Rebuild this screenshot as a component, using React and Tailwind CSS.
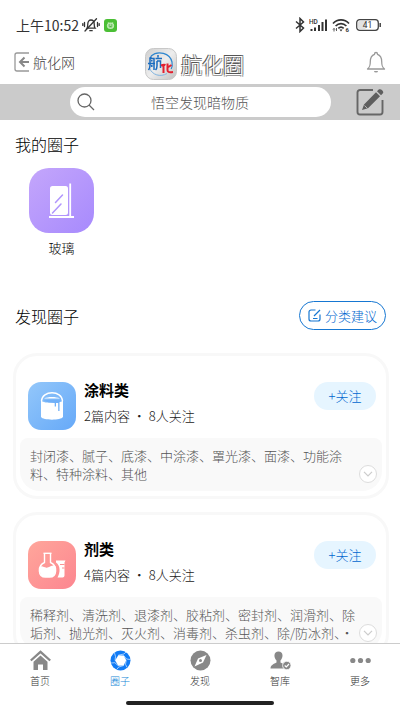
import React from 'react';

function MutedBell() {
  return (
    <svg viewBox="0 0 18 16" className="h-4 w-[18px]" fill="none" stroke="#333" strokeWidth="1.3" strokeLinecap="round">
      <path d="M5 11.2c.8-1 .8-2 .8-4.200C5.800 4.500 7 3 9 3s3.200 1.500 3.200 4c0 2.200 0 3.200.9 4.200z" />
      <path d="M7.800 13.700h2.400M3 14 14.500 1.800M2.500 5.500v4M.8 6.600v1.800M15.500 5.500v4M17.200 6.600v1.800" />
    </svg>
  );
}

function StatusBar() {
  return (
    <div className="flex h-11 shrink-0 items-end justify-between pr-[19px] pl-4 text-[#333]">
      <div className="flex h-[38px] items-center">
        <span className="text-sm">上午10:52</span>
        <span className="ml-[3px]"><MutedBell /></span>
        <svg viewBox="0 0 13 13" className="ml-1 size-[13px]">
          <rect width="13" height="13" rx="3" fill="#4bbf35" />
          <path d="M4 3.200 5 4.300M9 3.200 8 4.300" stroke="#c9f0bf" strokeWidth=".8" />
          <rect x="3.400" y="4" width="6.200" height="5.400" rx="2.200" fill="#a5e197" stroke="#d5f4cd" strokeWidth=".8" />
          <path d="M4.800 6h1M7.200 6h1M5.300 7.700h2.400" stroke="#35962a" strokeWidth=".8" />
        </svg>
      </div>
      <div className="flex h-[38px] items-center">
        <svg viewBox="0 0 10 16" className="h-4 w-2.5" fill="none" stroke="#333" strokeWidth="1.5">
          <path d="M1 4.500 8.500 11 5 14.500v-13L8.500 5 1 11.500" />
        </svg>
        <svg viewBox="0 0 19 16" className="ml-1 h-4 w-[19px]" fill="#333">
          <text x="0" y="6.500" fontSize="6.500" fontWeight="500" fontFamily="Roboto, sans-serif">HD</text>
          <path d="M1.500 12h2v2h-2zM5 10.500h2V14H5zM9 8h2v6H9zM12.500 5h2v9h-2zM16 2.500h2V14h-2z" />
        </svg>
        <svg viewBox="0 0 18 16" className="ml-1 h-4 w-[18px]" fill="none" stroke="#333" strokeWidth="1.700">
          <path d="M1 6.500C5.500 1.700 12.500 1.700 17 6.500M3.600 9c3.200-3.300 7.600-3.300 10.800 0M6.300 11.300c1.700-1.600 3.700-1.600 5.400 0" />
          <path d="M7.500 12.500h3L9 14.500z" fill="#333" stroke="none" />
          <path d="M2 14.500v-3M1 12.500l1-1 1 1M4.500 11v3" strokeWidth=".8" />
          <text x="13.500" y="15" fontSize="6" fontWeight="700" fill="#333" stroke="none" fontFamily="Roboto, sans-serif">6</text>
        </svg>
        <svg viewBox="0 0 25 12" className="ml-1.5 h-3 w-[25px]">
          <rect x=".7" y=".7" width="21.600" height="10.600" rx="3" fill="#fff" stroke="#444" strokeWidth="1.300" />
          <rect x="2" y="2" width="8" height="8" rx="1.500" fill="#e2e2e2" />
          <path d="M24.200 4v4" stroke="#444" strokeWidth="1.500" />
          <text x="11.500" y="9" fontSize="8.500" textAnchor="middle" fill="#333" fontFamily="Roboto, sans-serif">41</text>
        </svg>
      </div>
    </div>
  );
}

function Header() {
  return (
    <header className="grid h-10 shrink-0 grid-cols-[131px_auto_1fr] items-center px-[14px]">
      <a href="#home" className="flex items-center gap-1 pb-1 text-sm leading-5 font-light text-[#444]">
        <svg viewBox="0 0 15 20" className="h-5 w-[15px]" fill="none" stroke="#999" strokeWidth="1.300">
          <path d="M15 1H3a2 2 0 0 0-2 2v14a2 2 0 0 0 2 2h12" />
          <path d="M15 10H6.500M10.500 5.500 6 10l4.500 4.500" stroke="#888" strokeWidth="2" />
        </svg>
        航化网
      </a>
      <div className="flex items-center gap-1">
        <svg viewBox="0 0 32 32" className="size-8">
          <defs>
            <linearGradient id="logo" x1="0" y1="0" x2="1" y2="1">
              <stop stopColor="#cfcfcf" />
              <stop offset=".5" stopColor="#ededed" />
              <stop offset="1" stopColor="#c0c0c0" />
            </linearGradient>
          </defs>
          <rect x=".5" y=".5" width="31" height="31" rx="8" fill="url(#logo)" stroke="#c8c8c8" />
          <path d="M6 8C13 2 25 5 27 14c.6 3 .2 5-.8 7" fill="none" stroke="#2e86cf" strokeWidth="1.200" />
          <path d="M4.500 20c2.500 7 11 9.500 17.500 5.500" fill="none" stroke="#7fb4e0" strokeWidth="1" />
          <g fill="none" stroke="#1a6cc0" strokeWidth="1.500">
            <path d="M6.500 8.500 4.500 10.500M4.500 10.500h4.500v11.500M5 10.500v7c0 2-.5 3-1.500 4.500M3 15.500h7M6.800 12v1.500M6.800 17v2" />
            <path d="M13 7v2.500M10.500 10.500h6.500M12 13v5c0 2-.5 3-1.500 4M12 13h3.500v7" />
          </g>
          <g fill="none" stroke="#e3202f" strokeWidth="2">
            <path d="M16 17.500c2-1 3.500-1 4.500-.5M18.500 17v8M22.500 15.500V22c0 2 1 2.500 5.500 2M22.500 19.500l4-2.500" />
          </g>
        </svg>
        <span className="text-[21px] leading-8 font-light text-white [text-shadow:-1px_-1px_0_#555,1px_1px_0_#999,-1px_1px_0_#aaa,1px_-1px_0_#777]">航化圈</span>
      </div>
      <button type="button" aria-label="通知" className="justify-self-end pb-1">
        <svg viewBox="0 0 20 22" className="h-[22px] w-5" fill="none" stroke="#999" strokeWidth="1.300" strokeLinejoin="round">
          <path d="M1.500 18c2.300-1.800 2.800-3 2.800-7.500 0-4 1.700-6.300 4.200-7.200 0-2.400 3-2.400 3 0 2.500.9 4.200 3.200 4.200 7.200 0 4.500.5 5.700 2.800 7.500z" />
          <path d="M8 20h4a2 1.500 0 0 1-4 0z" fill="#999" stroke="none" />
        </svg>
      </button>
    </header>
  );
}

function SearchBar() {
  return (
    <div className="flex h-9 shrink-0 items-center bg-[#cbcbcb] pr-4 pl-[70px]">
      <label className="flex h-[30px] flex-1 items-center rounded-full bg-white pr-5 pl-[7px]">
        <svg viewBox="0 0 18 18" className="size-[18px] shrink-0" fill="none" stroke="#666" strokeWidth="1.300">
          <circle cx="7.500" cy="7.500" r="6.500" />
          <path d="m12 12 5 5" />
        </svg>
        <input type="search" aria-label="搜索" placeholder="悟空发现暗物质" className="w-full min-w-0 bg-transparent pl-2 text-center text-sm font-light outline-none placeholder:text-[#555]" />
      </label>
      <button type="button" aria-label="发布" className="ml-[25px]">
        <svg viewBox="0 0 28 28" className="size-7">
          <path d="M17 2H4a2.500 2.500 0 0 0-2.500 2.500V24A2.500 2.500 0 0 0 4 26.500h20a2.500 2.500 0 0 0 2.500-2.500V12" fill="none" stroke="#666" strokeWidth="1.900" />
          <path d="m6 22 2-5.500L20 4.300l4 4L12 20.200z M21 3.300l1.700-1.700c2-1.800 6 2 4 4L25 7.300z" fill="#5e5e5e" />
          <path d="m8.500 17.500 3 3" stroke="#cbcbcb" strokeWidth=".8" />
        </svg>
      </button>
    </div>
  );
}

function GlassIcon() {
  return (
    <svg viewBox="0 0 65 65" className="size-[65px]">
      <defs>
        <linearGradient id="glass" x1="0" y1="0" x2="1" y2="1">
          <stop stopColor="#c4a6fb" />
          <stop offset="1" stopColor="#a78afd" />
        </linearGradient>
      </defs>
      <rect width="65" height="65" rx="20" fill="url(#glass)" />
      <rect x="21" y="18" width="18" height="29" rx="2.500" fill="#fff" />
      <path d="M41.200 15.500v33M20 49h25" stroke="#fff" strokeWidth="1.800" />
      <path d="m26.500 34.500 7-7.500M23.500 45l8.500-9" stroke="#b196fc" strokeWidth="1.500" strokeLinecap="round" />
    </svg>
  );
}

function PaintIcon() {
  return (
    <svg viewBox="0 0 48 48" className="size-12 shrink-0">
      <defs>
        <linearGradient id="paint" x1="0" y1="0" x2="1" y2="1">
          <stop stopColor="#93c7fa" />
          <stop offset="1" stopColor="#66a9f8" />
        </linearGradient>
      </defs>
      <rect width="48" height="48" rx="13" fill="url(#paint)" />
      <path d="M13.500 19C14 8 34 8 34.500 19" fill="none" stroke="#fff" strokeWidth="1.400" />
      <path d="M16 16.500c4-2 12-2 16 0z" fill="#fff" />
      <path d="M13 18.500c2 1.500 4 2 6 2h10c2 0 4-.5 6-2V35c-2 3.500-20 3.500-22 0z" fill="#fff" />
      <path d="M15.500 18.500c5-1 12-1 17 0l-1 1.500V29h-1.300v-8H28v3.500h-1.300V21c-4 0-8-.8-11.200-2.500z" fill="#70b0f8" />
    </svg>
  );
}

function FlaskIcon() {
  return (
    <svg viewBox="0 0 48 48" className="size-12 shrink-0">
      <defs>
        <linearGradient id="flask" x1="0" y1="0" x2="1" y2="1">
          <stop stopColor="#ffa69b" />
          <stop offset="1" stopColor="#fc8690" />
        </linearGradient>
      </defs>
      <rect width="48" height="48" rx="13" fill="url(#flask)" />
      <path d="M28 19.500h9.500l-1 2V34.500a2 2 0 0 1-2 2h-5c3-5 3-12-1.500-15z" fill="#fff" />
      <path d="M32 23.500h4.500M34 27h2.500" stroke="#fc9295" />
      <path d="M16.500 12.500v9c-7 3-7 14.500 1 14.500h4c8 0 8-11.500 1-14.500v-9" fill="none" stroke="#fff" strokeWidth="1.400" strokeLinejoin="round" />
      <path d="M15.500 12.300h8" stroke="#fff" strokeWidth="1.400" />
      <path d="M11.500 26c3-2 5 1.500 8 .5s5-3 8-1.500c1 6-1.500 11-5.500 11h-5c-4 0-6-5-5.500-10z" fill="#fff" />
    </svg>
  );
}

const circles = [
  { title: '涂料类', meta: '2篇内容 ・ 8人关注', Icon: PaintIcon, tags: '封闭漆、腻子、底漆、中涂漆、罩光漆、面漆、功能涂料、特种涂料、其他' },
  { title: '剂类', meta: '4篇内容 ・ 8人关注', Icon: FlaskIcon, tags: '稀释剂、清洗剂、退漆剂、胶粘剂、密封剂、润滑剂、除垢剂、抛光剂、灭火剂、消毒剂、杀虫剂、除/防冰剂、·' },
];

function CircleCard({ title, meta, Icon, tags }) {
  return (
    <article className="rounded-3xl border-[3px] border-[#f8f8f8] bg-white px-1 pt-[26px] pb-[5px]">
      <div className="flex pr-1.5 pl-2">
        <Icon />
        <div className="ml-2 flex-1">
          <h3 className="text-[15px] leading-4 font-bold text-black">{title}</h3>
          <p className="mt-2.5 text-[13px] leading-4 font-light text-[#222]">{meta}</p>
        </div>
        <button type="button" className="h-7 w-[62px] rounded-full bg-[#e6f5ff] text-[13px] font-light text-[#0067cf]">+关注</button>
      </div>
      <div className="relative mt-2 rounded-t-lg rounded-b-[20px] bg-[#f9f9f9] pt-[9px] pr-5 pb-2 pl-2.5">
        <p className="text-[13px] leading-[18px] font-light text-[#555]">{tags}</p>
        <button type="button" aria-label="展开" className="absolute right-[5px] bottom-2 flex size-[18px] items-center justify-center rounded-full border border-[#ddd] bg-white">
          <svg viewBox="0 0 10 6" className="h-1.5 w-2.5" fill="none" stroke="#ccc" strokeWidth="1.200">
            <path d="m1 .8 4 4 4-4" />
          </svg>
        </button>
      </div>
    </article>
  );
}

const tabs = [
  {
    label: '首页',
    icon: (
      <>
        <path d="M.8 10.500 10.500 1.800l9.700 8.700" fill="none" stroke="#888" strokeWidth="2.300" />
        <path d="M3.500 11.800 10.500 5.500l7 6.300V20H13v-5.500H8V20H3.500z" />
      </>
    ),
  },
  {
    label: '圈子',
    active: true,
    icon: (
      <>
        <circle cx="10.500" cy="10.500" r="10" fill="#117bf5" />
        <path d="m8.300 5.200 5.400.3 2.500 4.800-2.500 5.200-5.400.2-3.200-5.200z" fill="#fff" />
        <path d="M8.300 5.200 14 4l2-2M13.700 5.500l2.800 3.500 3.700.5M16.200 10.300l-.7 4 1.500 3M13.700 15.500l-5 1.500-2 2.500M8.300 15.700l-3.500-3-3.800.3M5.100 10.500l.4-4L4.500 3" fill="none" stroke="#fff" strokeWidth=".6" />
      </>
    ),
  },
  {
    label: '发现',
    icon: (
      <>
        <circle cx="10.500" cy="10.500" r="10" />
        <path d="m16.500 5-3.500 7.500L4.500 16.500l3.500-8z" fill="#fff" />
        <circle cx="10.500" cy="10.500" r="1.500" />
      </>
    ),
  },
  {
    label: '智库',
    icon: (
      <>
        <path d="M8.500 1.500c5 0 5 6 2 9v2l4 2-1 4H.5c0-3 2-4 6-6v-2c-3-3-3-9 2-9z" />
        <circle cx="16.800" cy="15.500" r="4.200" stroke="#fff" strokeWidth=".8" />
        <path d="m14.700 15.500 1.600 1.500 2.700-3" fill="none" stroke="#fff" strokeWidth="1.200" />
      </>
    ),
  },
  {
    label: '更多',
    icon: (
      <>
        <circle cx="2.800" cy="10.500" r="2.600" />
        <circle cx="10.500" cy="10.500" r="2.600" />
        <circle cx="18.200" cy="10.500" r="2.600" />
      </>
    ),
  },
];

function TabBar() {
  return (
    <footer className="shrink-0 border-t border-[#ccc] bg-white pb-1.5">
      <nav className="grid grid-cols-5 pt-1.5">
        {tabs.map(({ label, icon, active }) => (
          <a key={label} href={'#' + label} className={'flex flex-col items-center text-[10px] leading-4 font-light ' + (active ? 'text-[#1487d8]' : 'text-[#333]')}>
            <svg viewBox="0 0 21 21" className="mb-0.5 size-[21px]" fill="#888">{icon}</svg>
            {label}
          </a>
        ))}
      </nav>
      <div className="mx-auto mt-3 h-1 w-[148px] rounded-full bg-[#222]" />
    </footer>
  );
}

export default function App() {
  return (
    <div lang="zh-CN" className="flex h-screen flex-col overflow-hidden bg-white font-['Noto_Sans_CJK_SC',sans-serif] text-[#111]">
      <StatusBar />
      <Header />
      <SearchBar />
      <main className="min-h-0 flex-1 overflow-hidden">
        <section className="px-[15px] pt-3">
          <h2 className="text-base leading-6 font-light text-black">我的圈子</h2>
          <a href="#glass" className="mt-3 ml-3.5 flex w-[65px] flex-col items-center gap-[5px] text-[13px] leading-5 font-light text-black">
            <GlassIcon />
            玻璃
          </a>
        </section>
        <section className="mt-[43px]">
          <div className="flex items-center justify-between pr-3.5 pl-[15px]">
            <h2 className="text-base leading-6 font-light text-black">发现圈子</h2>
            <button type="button" className="flex h-[29px] items-center gap-1 rounded-full border border-[#1677d2] px-2 text-[13px] font-light text-[#0067cf]">
              <svg viewBox="0 0 13 13" className="size-[13px]" fill="none" stroke="#1677d2" strokeWidth="1.200">
                <path d="M7.500 1H3a2 2 0 0 0-2 2v7a2 2 0 0 0 2 2h7a2 2 0 0 0 2-2V5.500M6 7l6-6M5 9.500h4.500" />
              </svg>
              分类建议
            </button>
          </div>
          <div className="mt-[23px] flex flex-col gap-[13px] pr-[11px] pl-[13px]">
            {circles.map((circle) => (
              <CircleCard key={circle.title} {...circle} />
            ))}
          </div>
        </section>
      </main>
      <TabBar />
    </div>
  );
}
